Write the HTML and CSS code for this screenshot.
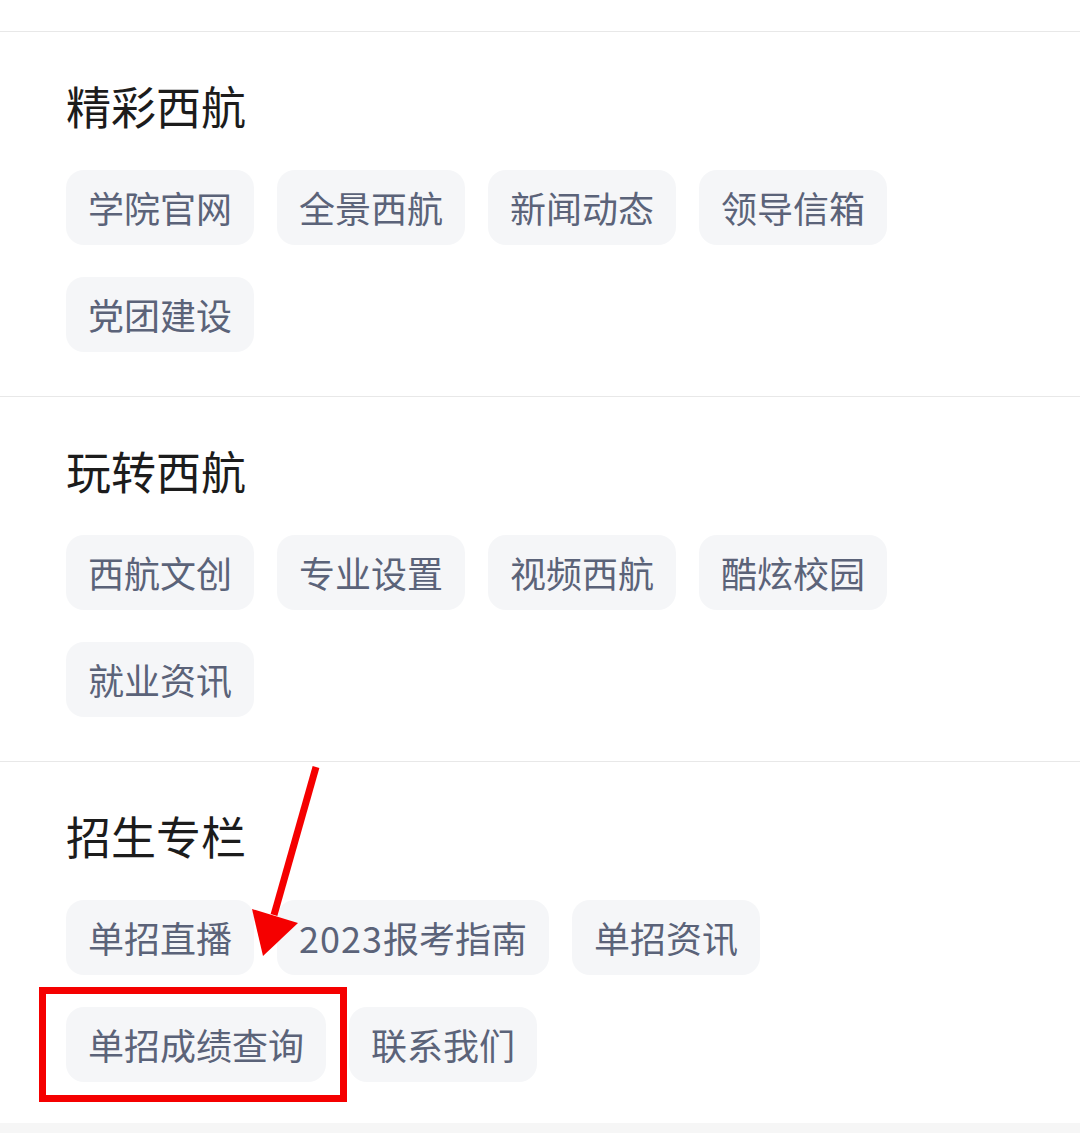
FILE: index.html
```html
<!doctype html>
<html lang="zh-CN">
 <head>
  <meta charset="UTF-8">
  <title>西航</title>
  <link rel="stylesheet" href="styles.css">
 </head>
 <body>
  <div class="page">
    <div class="top"></div>

    <!-- 精彩西航 -->
    <div class="section">
      <h2 class="title">精彩西航</h2>
      <div class="tags">
        <span class="tag">学院官网</span>
        <span class="tag">全景西航</span>
        <span class="tag">新闻动态</span>
        <span class="tag">领导信箱</span>
        <span class="tag">党团建设</span>
      </div>
    </div>

    <!-- 玩转西航 -->
    <div class="section">
      <h2 class="title">玩转西航</h2>
      <div class="tags">
        <span class="tag">西航文创</span>
        <span class="tag">专业设置</span>
        <span class="tag">视频西航</span>
        <span class="tag">酷炫校园</span>
        <span class="tag">就业资讯</span>
      </div>
    </div>

    <!-- 招生专栏 -->
    <div class="section last">
      <h2 class="title">招生专栏</h2>
      <div class="tags">
        <span class="tag">单招直播</span>
        <span class="tag"><span class="num">2023</span>报考指南</span>
        <span class="tag">单招资讯</span>
        <span class="tag">单招成绩查询</span>
        <span class="tag">联系我们</span>
      </div>
    </div>

    <div class="bottom"></div>

    <!-- 标注：箭头 + 红框 -->
    <svg class="mark-arrow" width="1080" height="1133" viewBox="0 0 1080 1133">
      <line x1="316" y1="767" x2="274" y2="915" stroke="#f50000" stroke-width="7"/>
      <polygon points="252,909 298,923 263,956" fill="#f50000"/>
    </svg>
    <div class="mark-box"></div>
  </div>
 </body>
</html>
```

FILE: styles.css
```css
*{margin:0;padding:0;box-sizing:border-box}

body{
  background:#fff;
  font-family:"Noto Sans CJK SC","Noto Sans",sans-serif;
}

.page{
  position:relative;
  width:1080px;
  height:1133px;
  overflow:hidden;
}

/* 顶部留白 + 分割线 */
.top{
  height:32px;
  border-bottom:1px solid #e8e8e8;
}

.section{
  padding:51px 66px 44px;
  border-bottom:1px solid #e8e8e8;
}
.section.last{
  border-bottom:none;
  padding-bottom:41px;
}

.title{
  font-size:45px;
  line-height:45px;
  font-weight:400;
  color:#1c1c1c;
  margin-bottom:42px;
}

.tags{
  display:flex;
  flex-wrap:wrap;
  gap:32px 23px;
}

.tag{
  display:block;
  height:75px;
  line-height:75px;
  padding:0 22px;
  font-size:36px;
  color:#5b6379;
  background:#f5f6f8;
  border-radius:18px;
  white-space:nowrap;
}
.tag .num{
  letter-spacing:1px;
}

.bottom{
  height:20px;
  background:#f6f6f6;
}

/* 红色标注 */
.mark-arrow{
  position:absolute;
  left:0;
  top:0;
}
.mark-box{
  position:absolute;
  left:39px;
  top:987px;
  width:308px;
  height:115px;
  border:7px solid #f50000;
}
```
